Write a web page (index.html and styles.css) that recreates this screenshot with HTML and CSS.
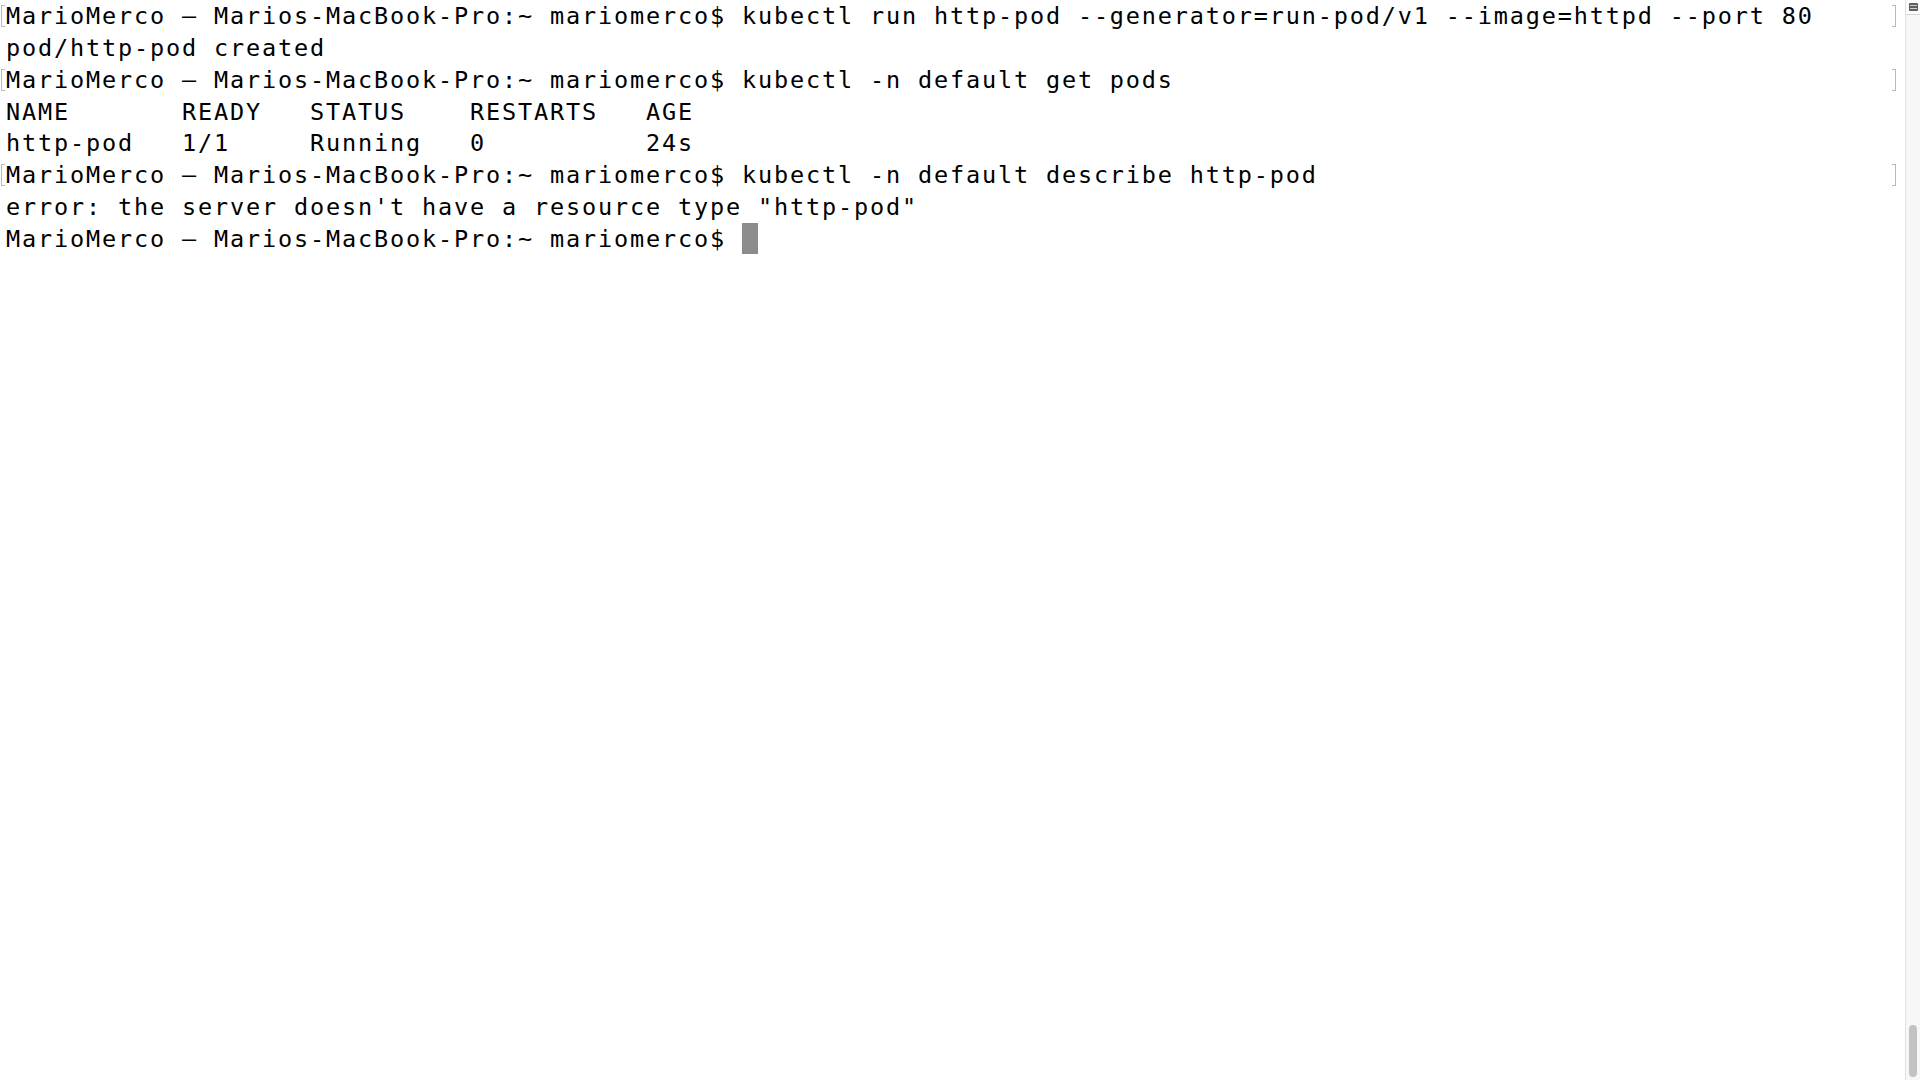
FILE: index.html
```html
<!DOCTYPE html>
<html lang="en">
<head>
<meta charset="utf-8">
<title>Terminal</title>
<link rel="stylesheet" href="styles.css">
</head>
<body>
<div class="window">
  <main class="term">
    <div class="line mark">MarioMerco — Marios-MacBook-Pro:~ mariomerco$ kubectl run http-pod --generator=run-pod/v1 --image=httpd --port 80</div>
    <div class="line">pod/http-pod created</div>
    <div class="line mark">MarioMerco — Marios-MacBook-Pro:~ mariomerco$ kubectl -n default get pods</div>
    <div class="line">NAME       READY   STATUS    RESTARTS   AGE</div>
    <div class="line">http-pod   1/1     Running   0          24s</div>
    <div class="line mark">MarioMerco — Marios-MacBook-Pro:~ mariomerco$ kubectl -n default describe http-pod</div>
    <div class="line">error: the server doesn't have a resource type "http-pod"</div>
    <div class="line">MarioMerco — Marios-MacBook-Pro:~ mariomerco$ <span class="cursor"> </span></div>
  </main>
  <aside class="scrollbar">
    <div class="split-btn"><span class="split-icon"></span></div>
    <div class="track"><div class="thumb"></div></div>
  </aside>
</div>
</body>
</html>
```

FILE: styles.css
```css
* { box-sizing: border-box; }
html, body {
  margin: 0;
  padding: 0;
  background: #ffffff;
  height: 100%;
}
.window {
  display: flex;
  height: 1080px;
  width: 1920px;
  overflow: hidden;
}
.term {
  flex: 1;
  padding: 0 0 0 6px;
  font-family: "DejaVu Sans Mono", "Liberation Mono", monospace;
  font-size: 23.5px;
  letter-spacing: 1.85px;
  line-height: 31.85px;
  color: #000000;
}
.line {
  position: relative;
  white-space: pre;
  height: 31.85px;
  padding-top: 1px;
}
.line.mark::before {
  content: "";
  position: absolute;
  left: -5px;
  top: 5px;
  width: 3px;
  height: 20px;
  border: 1px solid #b8b8b8;
  border-right: none;
}
.line.mark::after {
  content: "";
  position: absolute;
  left: 1886px;
  top: 5px;
  width: 3px;
  height: 20px;
  border: 1px solid #b8b8b8;
  border-left: none;
}
.cursor {
  display: inline-block;
  width: 16px;
  height: 31.5px;
  margin-top: -1px;
  vertical-align: top;
  background: #8c8c8c;
}
.scrollbar {
  width: 15px;
  flex: none;
  display: flex;
  flex-direction: column;
  border-left: 1px solid #e2e2e2;
  background: #f7f7f7;
}
.split-btn {
  height: 15px;
  flex: none;
  display: flex;
  align-items: flex-start;
  justify-content: center;
  padding-top: 3px;
  background: #fbfbfb;
  border-bottom: 1px solid #d6d6d6;
}
.split-icon {
  display: block;
  width: 9px;
  height: 8px;
  border-radius: 1px;
  background: #5e5e5e;
  position: relative;
}
.split-icon::before,
.split-icon::after {
  content: "";
  position: absolute;
  left: 1px;
  right: 1px;
  height: 1px;
  background: #cfcfcf;
}
.split-icon::before { top: 2px; }
.split-icon::after { top: 5px; }
.track {
  flex: 1;
  display: flex;
  flex-direction: column;
  justify-content: flex-end;
  align-items: center;
  padding-bottom: 3px;
}
.thumb {
  width: 8px;
  height: 52px;
  border-radius: 4px;
  background: #c2c2c2;
}
```
